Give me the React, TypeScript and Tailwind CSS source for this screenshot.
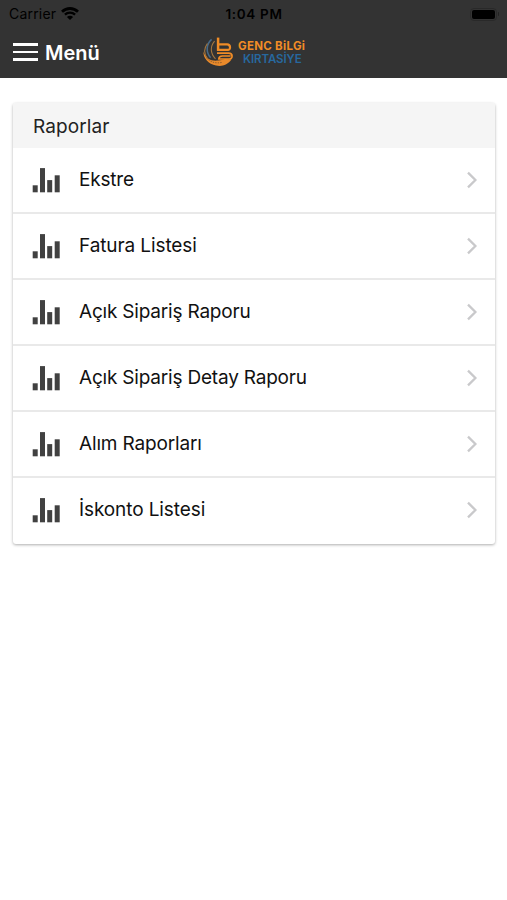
const reports = [
  { label: "Ekstre", tracking: "tracking-[-0.2px]" },
  { label: "Fatura Listesi", tracking: "tracking-[-0.1px]" },
  { label: "Açık Sipariş Raporu", tracking: "tracking-[-0.2px]" },
  { label: "Açık Sipariş Detay Raporu", tracking: "tracking-[-0.2px]" },
  { label: "Alım Raporları", tracking: "tracking-[-0.15px]" },
  { label: "İskonto Listesi", tracking: "tracking-[-0.1px]" },
];

function WifiIcon() {
  return (
    <svg viewBox="0 0 18 14" className="w-[18px] h-[14px]" fill="none" stroke="#000">
      <path d="M1 4.7C5.6 .4 12.4 .4 17 4.7" strokeWidth="2.8" />
      <path d="M3.9 7.7C6.8 5 11.2 5 14.1 7.7" strokeWidth="2.3" />
      <path d="M9 12.9L5.9 9.9C7.7 8.4 10.3 8.4 12.1 9.9Z" fill="#000" stroke="none" />
    </svg>
  );
}

function ChartIcon() {
  return (
    <svg viewBox="0 0 28 25" className="w-[28px] h-[25px] shrink-0" fill="#414141">
      <rect x="0.7" y="17.3" width="5" height="7" />
      <rect x="8" y="0.1" width="5" height="24.2" />
      <rect x="15.2" y="12.1" width="5" height="12.2" />
      <rect x="22.7" y="7.3" width="5" height="17" />
    </svg>
  );
}

function ChevronIcon() {
  return (
    <svg viewBox="0 0 12 18" className="w-[12px] h-[18px] shrink-0" fill="none">
      <path d="M2 1.6L9.4 9L2 16.4" stroke="#c9c9cb" strokeWidth="2.3" />
    </svg>
  );
}

function LogoMark() {
  return (
    <svg viewBox="0 0 32 32" className="w-[32px] h-[32px]" fill="none">
      {/* swoosh */}
      <path d="M1.4 15.5C3.5 22.5 9 25.4 16 24.6C19 24.3 21 23.8 23 23L29.4 23.6C26 28.8 20 31 14 29.6C6.5 28 1.2 22.5 1.4 15.5Z" fill="#e98a2b" />
      <path d="M9.6 3.4C4.2 8 3.6 16 8.6 21.8" stroke="#476a88" strokeWidth="1.6" />
      <path d="M12.6 5.2C8 10.5 8.2 17.5 13.5 22.8" stroke="#a5773f" strokeWidth="1.1" />
      <path d="M5.4 7.5C1.8 12.5 2 18 5.4 22.5" stroke="#a5773f" strokeWidth="1.1" />
      <path d="M4.5 22C9 26.6 14 27.6 20 26.4" stroke="#6c4b2b" strokeWidth="0.7" strokeDasharray="1.5 1" />
      {/* monogram */}
      <path d="M16.1 1.6V14.8" stroke="#f08c26" strokeWidth="2.5" />
      <path d="M16 8.4H25.2C28.8 8.4 28.8 13.9 26.2 13.9H15" stroke="#f08c26" strokeWidth="2.2" />
      <path d="M15 17.2H26.6C31.2 17.2 31 23 27.2 23H16.8C17 20.8 18.4 20 20.4 20H28.6" stroke="#f08c26" strokeWidth="1.7" />
    </svg>
  );
}

function StatusBar() {
  return (
    <div className="grid grid-cols-3 items-center h-[27px] pl-[9px] pr-[8px] text-black">
      <div className="flex items-center gap-[5px]">
        <span className="pb-px text-[14px] leading-[25px] tracking-[0.2px]">Carrier</span>
        <WifiIcon />
      </div>
      <span className="text-center text-[13.5px] leading-[28px] font-semibold tracking-[0.65px] whitespace-nowrap">1:04 PM</span>
      <div className="flex items-center justify-end">
        <div className="w-[27px] h-[13px] rounded-[4px] border border-[#292929] p-px">
          <div className="w-[23px] h-[9px] rounded-[2px] bg-black" />
        </div>
        <div className="w-[1px] h-[4px] ml-px rounded-r bg-[#222]" />
      </div>
    </div>
  );
}

function Header() {
  return (
    <header className="h-[78px] bg-[#333333]">
      <StatusBar />
      <div className="flex h-[51px]">
        <button className="flex items-start w-[189px] pl-[13px] pt-[11px] text-white">
          <span className="flex flex-col gap-[5px] w-[25px] pt-[5px]">
            <span className="h-[2.5px] bg-white" />
            <span className="h-[2.5px] bg-white" />
            <span className="h-[2.5px] bg-white" />
          </span>
          <span className="ml-[7px] text-[20px] leading-[30px] font-semibold">Menü</span>
        </button>
        <div className="flex items-start pl-[13px] pt-[9px]">
          <LogoMark />
          <div className="ml-[4px] pt-[4px] text-[11.5px] leading-[12.5px] whitespace-nowrap">
            <div className="font-bold text-[#f08c26] tracking-[0.3px]">GENC BiLGi</div>
            <div className="pl-[5px] font-semibold text-[#27689f] tracking-[-0.1px]">KIRTASİYE</div>
          </div>
        </div>
      </div>
    </header>
  );
}

export default function App() {
  return (
    <div className="min-h-[900px] bg-white font-['Inter','Roboto',sans-serif]">
      <Header />
      <main className="pt-[25px] pl-[13px] pr-[12px]">
        <section className="rounded-[3px] overflow-hidden bg-white shadow-[0_1px_3px_rgba(0,0,0,0.32)]">
          <h2 className="h-[45px] pl-[20px] bg-[#f5f5f5] text-[19px] leading-[47px] tracking-[0.1px] text-[#222]">Raporlar</h2>
          <ul>
            {reports.map((report) => (
              <li
                key={report.label}
                className="flex items-center h-[66px] pl-[19px] pr-[17px] border-b-2 border-[#e9e9e9] last:border-transparent"
              >
                <ChartIcon />
                <span className={`flex-1 ml-[19px] pb-px text-[19px] leading-[28px] text-[#111] ${report.tracking}`}>
                  {report.label}
                </span>
                <ChevronIcon />
              </li>
            ))}
          </ul>
        </section>
      </main>
    </div>
  );
}
